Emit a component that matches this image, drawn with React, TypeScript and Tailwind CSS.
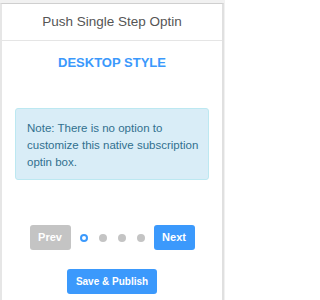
import React from 'react';

export default function App() {
  const steps = [0, 1, 2, 3];
  const current = 0;

  return (
    <div className="w-[225px] h-[300px] overflow-hidden bg-[#f1f1f1] pt-[3px] font-['Liberation_Sans',Arial,sans-serif]">
      <div className="h-full bg-white border-t border-[#cfcfcf] border-l-2 border-r-2 border-l-[#e6e6e6] border-r-[#e0e0e0] mr-[1px] flex flex-col">
        <div className="h-[37px] border-b border-[#e5e5e5] flex items-center justify-center">
          <span className="text-[13.5px] text-[#555]">Push Single Step Optin</span>
        </div>

        <h3 className="mt-[13px] text-center text-[13px] font-bold text-[#3b99fc] leading-[17px]">DESKTOP STYLE</h3>

        <div className="mt-[37px] mx-[13px] rounded-[3px] border border-[#bce8f1] bg-[#d9edf7] pl-[11px] pr-[6px] pt-[11px] pb-[8px]">
          <p className="text-[11.5px] leading-[17px] text-[#31708f]">
            Note: There is no option to customize this native subscription optin box.
          </p>
        </div>

        <div className="mt-[45px] flex items-center justify-center">
          <button className="h-[25px] w-[41px] rounded-[3px] bg-[#c4c4c4] text-[11px] font-bold text-white">Prev</button>
          <div className="flex items-center gap-[11px] mx-[9px]">
            {steps.map((s) =>
              s === current ? (
                <span key={s} className="w-[8px] h-[8px] rounded-full border-2 border-[#3b99fc] bg-white" />
              ) : (
                <span key={s} className="w-[8px] h-[8px] rounded-full bg-[#c4c4c4]" />
              )
            )}
          </div>
          <button className="h-[25px] w-[41px] rounded-[3px] bg-[#3b99fc] text-[11px] font-bold text-white">Next</button>
        </div>

        <div className="mt-[19px] flex justify-center">
          <button className="h-[25px] w-[90px] rounded-[3px] bg-[#3b99fc] text-[10px] font-bold text-white">Save &amp; Publish</button>
        </div>
      </div>
    </div>
  );
}
